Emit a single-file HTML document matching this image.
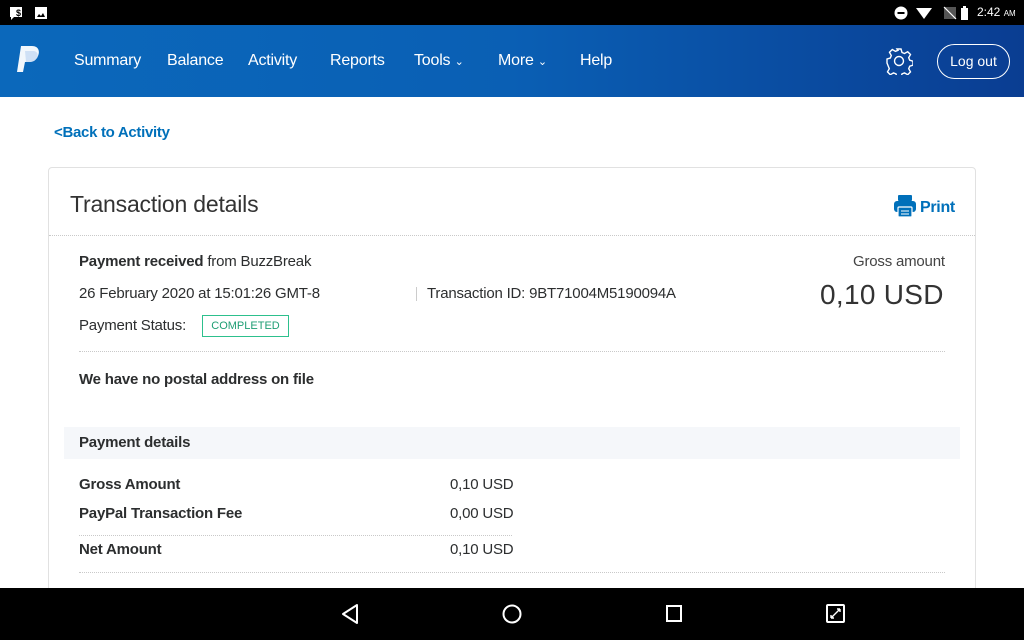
<!DOCTYPE html>
<html><head><meta charset="utf-8"><style>
*{margin:0;padding:0;box-sizing:border-box}
body{width:1024px;height:640px;overflow:hidden;background:#fff;font-family:"Liberation Sans",sans-serif;color:#2c2e2f;position:relative}
.abs{position:absolute;white-space:nowrap}
#sb{left:0;top:0;width:1024px;height:25px;background:#000}
#hd{left:0;top:25px;width:1024px;height:72px;background:linear-gradient(90deg,#0b68bb 0%,#0a5fb4 50%,#0a3d92 100%)}
.nav{top:52px;color:#fff;font-size:16px;letter-spacing:-0.2px}
#nb{left:0;top:588px;width:1024px;height:52px;background:#000}
#card{left:48px;top:167px;width:928px;height:440px;border:1px solid #e1e1e1;border-radius:4px}
.dot{height:0;border-top:1px dotted #c9c9c9}
.b{font-weight:bold}
.t15{font-size:15px;letter-spacing:-0.2px}
</style></head><body>
<div class="abs" id="sb"></div>
<svg class="abs" style="left:8px;top:5px" width="44" height="16"><rect x="2" y="2" width="12" height="10" fill="#fff"/><path d="M3 12 L3 15 L6 12Z" fill="#fff"/><text x="8" y="11" font-size="9" font-weight="bold" fill="#000" font-family="Liberation Sans">$</text><rect x="27" y="2" width="12" height="12" fill="#fff"/><path d="M29 12 L31 9 L33 11 L35 8 L37 12Z" fill="#000"/></svg>
<svg class="abs" style="left:893px;top:5px" width="80" height="16"><circle cx="8" cy="8" r="6.5" fill="#fff"/><rect x="4.5" y="7" width="7" height="2" fill="#000"/><path d="M23 3 L39 3 L31 14Z" fill="#fff"/><path d="M51 2 L51 14 L63 14 L63 2Z" fill="#555"/><path d="M51 2 L63 14" stroke="#fff" stroke-width="1.2"/><rect x="68" y="3" width="7" height="12" fill="#fff"/><rect x="70" y="1" width="3" height="2" fill="#fff"/></svg>
<div class="abs" style="left:977px;top:5px;color:#fff;font-size:12px">2:42 <span style="font-size:8px">AM</span></div>
<div class="abs" id="hd"></div>
<svg class="abs" style="left:15px;top:44px" width="28" height="32"><path d="M6 2 H17 C24 2 25 8 23 12 C21 17 17 18 13 18 H10 L8 28 H2 Z" fill="#fff" opacity="0.95"/><path d="M10 7 H18 C23 7 24 12 21 15 C19 18 16 18 13 18 H11 Z" fill="#cfe0f5"/></svg>
<div class="abs nav" style="left:74px">Summary</div>
<div class="abs nav" style="left:167px">Balance</div>
<div class="abs nav" style="left:248px">Activity</div>
<div class="abs nav" style="left:330px">Reports</div>
<div class="abs nav" style="left:414px">Tools <span style="font-size:11px">&#8964;</span></div>
<div class="abs nav" style="left:498px">More <span style="font-size:11px">&#8964;</span></div>
<div class="abs nav" style="left:580px">Help</div>
<svg class="abs" style="left:885px;top:47px" width="28" height="28" viewBox="0 0 28 28"><path d="M12 2h4l1 3.5 2.5 1 3.2-1.8 2.8 2.8-1.8 3.2 1 2.5 3.3 1v4l-3.3 1-1 2.5 1.8 3.2-2.8 2.8-3.2-1.8-2.5 1-1 3.3h-4l-1-3.3-2.5-1-3.2 1.8-2.8-2.8 1.8-3.2-1-2.5L2 16v-4l3.3-1 1-2.5-1.8-3.2 2.8-2.8 3.2 1.8 2.5-1z" fill="none" stroke="#fff" stroke-width="1.4"/><circle cx="14" cy="14" r="4.5" fill="none" stroke="#fff" stroke-width="1.4"/></svg>
<div class="abs" style="left:937px;top:44px;width:73px;height:35px;border:1.5px solid #fff;border-radius:18px;color:#fff;font-size:14px;text-align:center;line-height:33px">Log out</div>

<div class="abs b" style="left:54px;top:124px;color:#0070ba;font-size:15px;letter-spacing:-0.3px">&lt;Back to Activity</div>

<div class="abs" id="card"></div>
<div class="abs" style="left:70px;top:191px;font-size:23px;color:#333;letter-spacing:-0.2px">Transaction details</div>
<svg class="abs" style="left:894px;top:194px" width="22" height="24"><rect x="4" y="1" width="14" height="6" rx="1" fill="#0070ba"/><rect x="0" y="7" width="22" height="11" rx="3" fill="#0070ba"/><rect x="4" y="13" width="14" height="10" rx="1" fill="#0070ba" stroke="#fff" stroke-width="1.2"/><path d="M7 17h8M7 20h8" stroke="#fff" stroke-width="1"/></svg>
<div class="abs b" style="left:920px;top:199px;color:#0070ba;font-size:16px;letter-spacing:-0.3px">Print</div>
<div class="abs dot" style="left:49px;top:235px;width:926px"></div>

<div class="abs t15" style="left:79px;top:253px"><span class="b">Payment received</span> from BuzzBreak</div>
<div class="abs t15" style="left:79px;top:285px">26 February 2020 at 15:01:26 GMT-8</div>
<div class="abs" style="left:416px;top:287px;width:1px;height:14px;background:#ccc"></div>
<div class="abs t15" style="left:427px;top:285px">Transaction ID: 9BT71004M5190094A</div>
<div class="abs t15" style="left:79px;top:317px">Payment Status:</div>
<div class="abs" style="left:202px;top:315px;width:87px;height:22px;border:1px solid #2dc08d;color:#1f9e74;font-size:11px;text-align:center;line-height:20px">COMPLETED</div>
<div class="abs t15" style="left:853px;top:253px;color:#444">Gross amount</div>
<div class="abs" style="left:820px;top:279px;font-size:28px;color:#333;letter-spacing:0.3px">0,10 USD</div>
<div class="abs dot" style="left:79px;top:351px;width:866px"></div>
<div class="abs t15 b" style="left:79px;top:371px">We have no postal address on file</div>

<div class="abs" style="left:64px;top:427px;width:896px;height:32px;background:#f5f7fa"></div>
<div class="abs t15 b" style="left:79px;top:434px">Payment details</div>
<div class="abs t15 b" style="left:79px;top:476px">Gross Amount</div>
<div class="abs t15" style="left:450px;top:476px">0,10 USD</div>
<div class="abs t15 b" style="left:79px;top:505px">PayPal Transaction Fee</div>
<div class="abs t15" style="left:450px;top:505px">0,00 USD</div>
<div class="abs dot" style="left:79px;top:535px;width:433px"></div>
<div class="abs t15 b" style="left:79px;top:541px">Net Amount</div>
<div class="abs t15" style="left:450px;top:541px">0,10 USD</div>
<div class="abs dot" style="left:79px;top:572px;width:866px"></div>

<div class="abs" id="nb"></div>
<svg class="abs" style="left:340px;top:602px" width="520" height="24"><path d="M17 3 L17 21 L3 12Z" fill="none" stroke="#fff" stroke-width="2" stroke-linejoin="round"/><circle cx="172" cy="12" r="8.5" fill="none" stroke="#fff" stroke-width="2"/><rect x="327" y="4" width="14" height="15" fill="none" stroke="#fff" stroke-width="2"/><rect x="487" y="3" width="17" height="17" rx="1" fill="none" stroke="#fff" stroke-width="2"/><path d="M491 16 L496 11 M491 16 v-3 M491 16 h3 M500 7 L496 11 M500 7 v3 M500 7 h-3" stroke="#fff" stroke-width="1.4"/></svg>
</body></html>
